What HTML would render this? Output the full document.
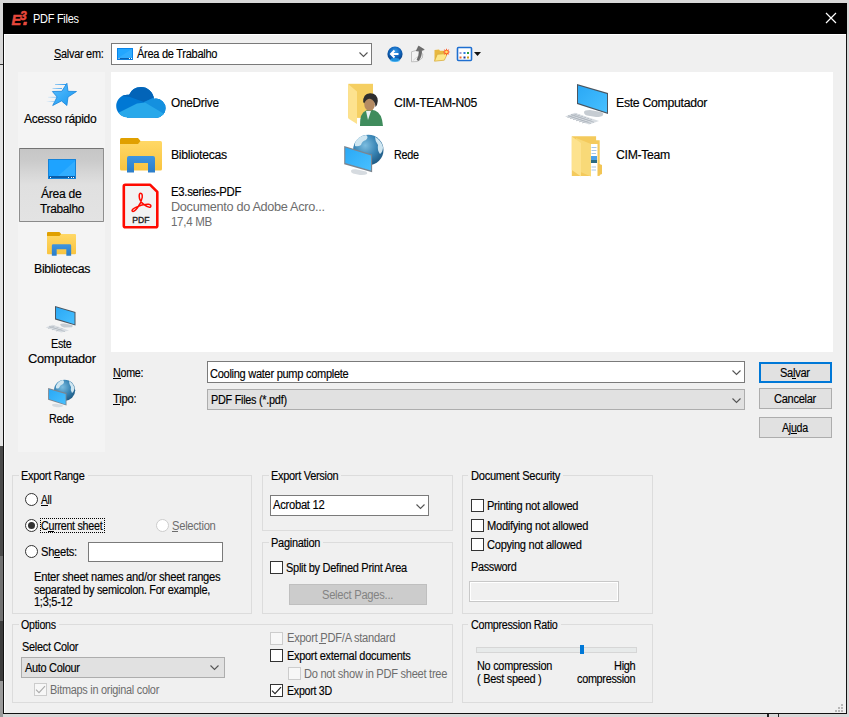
<!DOCTYPE html>
<html><head><meta charset="utf-8"><style>
html,body{margin:0;padding:0;width:849px;height:717px;overflow:hidden;background:#d4d4d4}
.a{position:absolute}
.t{position:absolute;font-family:"Liberation Sans",sans-serif;font-size:12px;line-height:1;white-space:pre;transform-origin:0 0}
</style></head><body>
<div class="a" style="left:0px;top:0px;width:849px;height:717px;box-sizing:border-box;background:#d8d8d8"></div>
<div class="a" style="left:0px;top:64px;width:3px;height:1px;box-sizing:border-box;background:#333"></div>
<div class="a" style="left:0px;top:65px;width:3px;height:381px;box-sizing:border-box;background:#e4e4e4"></div>
<div class="a" style="left:0px;top:446px;width:3px;height:110px;box-sizing:border-box;background:#4a4a4a"></div>
<div class="a" style="left:0px;top:556px;width:3px;height:65px;box-sizing:border-box;background:#707070"></div>
<div class="a" style="left:0px;top:621px;width:3px;height:60px;box-sizing:border-box;background:#3c3c3c"></div>
<div class="a" style="left:0px;top:681px;width:3px;height:36px;box-sizing:border-box;background:#9a9a9a"></div>
<div class="a" style="left:3px;top:3px;width:844px;height:711px;box-sizing:border-box;background:#f0f0f0;border:1px solid #111"></div>
<div class="a" style="left:3px;top:3px;width:844px;height:31px;box-sizing:border-box;background:#000"></div>
<div class="a" style="left:4px;top:34px;width:842px;height:1px;box-sizing:border-box;background:#fff"></div>
<div class="a" style="left:4px;top:34px;width:1px;height:679px;box-sizing:border-box;background:#fff"></div>
<svg class="a" style="left:10px;top:9px" width="20" height="18"><g fill="#e8483c" stroke="#e8483c" stroke-width=".5"><text x="1.5" y="16" font-family="Liberation Sans" font-weight="bold" font-style="italic" font-size="14.5">E</text><text x="10" y="11" font-family="Liberation Sans" font-weight="bold" font-style="italic" font-size="12">3</text><path d="M14 13 L17 13 L16.3 16 L13.3 16 Z"/></g></svg>
<svg class="a" style="left:824px;top:11px" width="14" height="14"><path d="M2 2 L12 12 M12 2 L2 12" stroke="#fff" stroke-width="1.2"/></svg>
<div class="a" style="left:111px;top:43px;width:261px;height:22px;box-sizing:border-box;border:1px solid #7a7a7a;background:#fff"></div>
<svg class="a" style="left:359px;top:52px" width="10" height="6"><path d="M0.5 0.5 L4.5 4.5 L8.5 0.5" fill="none" stroke="#555" stroke-width="1.1"/></svg>
<svg class="a" style="left:117px;top:48px" width="17" height="13"><rect x="0" y="0" width="16" height="12" fill="#0a84e8"/><rect x="1" y="1" width="14" height="9" fill="#22a6ff"/><path d="M1 10 L15 1 L15 10 Z" fill="#3db3ff" opacity=".6"/><rect x="1" y="10" width="14" height="1.2" fill="#0a5fb0"/><rect x="1.5" y="10" width="1" height="1" fill="#fff"/><rect x="12" y="10" width="1" height="1" fill="#fff"/><rect x="14" y="10" width="1" height="1" fill="#fff"/></svg>
<svg class="a" style="left:386px;top:45px" width="18" height="18"><defs><radialGradient id="bk" cx="50%" cy="35%" r="65%"><stop offset="0" stop-color="#3aa0f0"/><stop offset=".6" stop-color="#0e5fb5"/><stop offset="1" stop-color="#083a78"/></radialGradient></defs><circle cx="9" cy="9" r="7.6" fill="url(#bk)"/><ellipse cx="9" cy="15" rx="5" ry="2" fill="#2ab0ff" opacity=".7"/><path d="M5 9 L12.5 9 M8.5 5.5 L5 9 L8.5 12.5" fill="none" stroke="#fff" stroke-width="2"/></svg>
<svg class="a" style="left:408px;top:44px" width="44" height="20" viewBox="408 44 44 20"><path d="M411.5 51.8 L416 50.5 L420 51.5 L422.8 54 L422.3 58 L417.5 61.5 L411.5 61.8 Z" fill="#f2f2f2" stroke="#b4b4b4" stroke-width=".8"/><path d="M413 60.5 L417 57 L421 57" fill="none" stroke="#d0d0d0" stroke-width=".8"/><path d="M417 60 Q419.3 55.5 419.2 50.8 L416.3 50.8 L418.6 46 L424.3 49.6 L421.7 50.6 Q421.8 56.5 418.8 60.5 Z" fill="#6e6e6e" stroke="#4e4e4e" stroke-width=".5"/><path d="M434.5 50 L439 49.5 L440 50.8 L444 50.8 L444 60 L434.5 61 Z" fill="#e8b840"/><path d="M434.5 61.2 L437.3 54.3 L447.5 53.5 L444.3 60.2 Z" fill="#fde88a" stroke="#d6a838" stroke-width=".7"/><polygon points="450.30,52.00 448.26,52.73 449.19,54.69 447.23,53.76 446.50,55.80 445.77,53.76 443.81,54.69 444.74,52.73 442.70,52.00 444.74,51.27 443.81,49.31 445.77,50.24 446.50,48.20 447.23,50.24 449.19,49.31 448.26,51.27" fill="#ff4a12"/><circle cx="446.5" cy="52" r="1.4" fill="#ffe36a"/></svg>
<svg class="a" style="left:456px;top:46px" width="28" height="16"><rect x="1.5" y="1.5" width="14" height="13" rx="1" fill="#fff" stroke="#1f6fd0" stroke-width="1.6"/><rect x="3.5" y="6" width="2" height="2" fill="#9b9bd0"/><rect x="7.5" y="6" width="2" height="2" fill="#2a7ee0"/><rect x="11" y="6" width="2" height="2" fill="#2aa040"/><rect x="3.5" y="10.5" width="2" height="2" fill="#f06a30"/><rect x="7.5" y="10.5" width="2" height="2" fill="#1a3a9a"/><rect x="11" y="10.5" width="2" height="2" fill="#d0a020"/><path d="M18 6 L25 6 L21.5 10 Z" fill="#111"/></svg>
<div class="a" style="left:18px;top:72px;width:87px;height:380px;box-sizing:border-box;background:#f4f4f4"></div>
<div class="a" style="left:19px;top:148px;width:85px;height:74px;box-sizing:border-box;border:1px solid #8a8a8a;border-top-color:#737373;border-left-color:#8f8f8f;border-right-color:#8f8f8f;border-radius:1px;background:linear-gradient(#c6c6c6,#cbcbcb 12px,#d6d6d6 24px,#e0e0e0 36px,#e3e3e3)"></div>
<svg class="a" style="left:44px;top:80px" width="36" height="30" viewBox="44 80 36 30"><defs><linearGradient id="stg" x1="0" y1="0" x2="1" y2="1"><stop offset="0" stop-color="#5cc0ff"/><stop offset="1" stop-color="#1696ee"/></linearGradient><linearGradient id="mlg" x1="0" y1="0" x2="1" y2="0"><stop offset="0" stop-color="#2a9af0" stop-opacity="0"/><stop offset="1" stop-color="#2a9af0"/></linearGradient></defs><path d="M55 84.5 L66 84.5 M52.5 88.5 L62 88.5 M48 97.3 L57 97.3 M46 101.5 L54 101.5" stroke="url(#mlg)" stroke-width="1"/><path d="M66.9 83.3 L68 91.3 L76.5 91.5 L68 97 L66.9 105.5 L61.5 100.9 L52.7 105.5 L57.1 97 L52.4 91.5 L61.8 91.3 Z" fill="url(#stg)" stroke="#1684dc" stroke-width=".8" stroke-linejoin="round"/></svg>
<svg class="a" style="left:48px;top:159px" width="29" height="21"><rect x="0" y="0" width="28" height="20" fill="#1683d8"/><rect x="1" y="1" width="26" height="16" fill="#1ea3ff"/><path d="M10 17 L27 2 L27 17 Z" fill="#42b6ff" opacity=".55"/><rect x="1" y="17" width="26" height="2" fill="#0b5da8"/><rect x="2" y="18" width="1" height="1" fill="#fff"/><rect x="20" y="18" width="1" height="1" fill="#fff"/><rect x="23" y="18" width="1" height="1" fill="#fff"/><rect x="25" y="18" width="1" height="1" fill="#fff"/></svg>
<svg width="0" height="0" style="position:absolute"><defs><linearGradient id="fy" x1="0" y1="0" x2="0" y2="1"><stop offset="0" stop-color="#ffd866"/><stop offset="1" stop-color="#f9c440"/></linearGradient><linearGradient id="lb" x1="0" y1="0" x2="0" y2="1"><stop offset="0" stop-color="#3e95e0"/><stop offset="1" stop-color="#2b7cc8"/></linearGradient><linearGradient id="scr" x1="0" y1="0" x2="1" y2="1"><stop offset="0" stop-color="#2aa8f5"/><stop offset="1" stop-color="#48c0ff"/></linearGradient><radialGradient id="glb" cx="40%" cy="35%" r="70%"><stop offset="0" stop-color="#7cbde0"/><stop offset=".55" stop-color="#3884b4"/><stop offset="1" stop-color="#1d5780"/></radialGradient></defs></svg>
<svg class="a" style="left:47px;top:232px" width="29" height="24" viewBox="0 0 42 35" preserveAspectRatio="none"><rect x="0" y="3" width="42" height="29.5" rx="1.5" fill="url(#fy)"/><path d="M0 1.5 Q0 0 1.5 0 L18 0 L20.5 3 L18 6 L0 6 Z" fill="#e0a000"/><path d="M7 34.6 L7 20 Q7 18 9 18 L33 18 Q35 18 35 20 L35 34.6 L28 34.6 L28 25 L14 25 L14 34.6 Z" fill="url(#lb)"/></svg>
<div class="a" style="left:111px;top:72px;width:722px;height:280px;box-sizing:border-box;background:#fff"></div>
<svg class="a" style="left:116px;top:86px" width="50" height="33" viewBox="0 0 50 33"><defs><clipPath id="cl"><circle cx="11.5" cy="20" r="11.3"/><circle cx="25" cy="14" r="13"/><circle cx="40" cy="22.2" r="9.6"/><rect x="11" y="16" width="30" height="15.8"/></clipPath></defs><g clip-path="url(#cl)"><rect x="0" y="0" width="50" height="33" fill="#0078d4"/><path d="M0 0 L50 0 L50 8 L37 12 L28 16 L14 11 L0 9 Z" fill="#0364b8"/><path d="M28 16 L37 12 L50 12 L50 33 L40 33 Z" fill="#1490df"/><path d="M0 28 L21 17.5 L29 16.5 L50 29 L50 33 L0 33 Z" fill="#28a8ea"/></g></svg>
<svg class="a" style="left:120px;top:138px" width="42" height="35" viewBox="0 0 42 35" preserveAspectRatio="none"><rect x="0" y="3" width="42" height="29.5" rx="1.5" fill="url(#fy)"/><path d="M0 1.5 Q0 0 1.5 0 L18 0 L20.5 3 L18 6 L0 6 Z" fill="#e0a000"/><path d="M7 34.6 L7 20 Q7 18 9 18 L33 18 Q35 18 35 20 L35 34.6 L28 34.6 L28 25 L14 25 L14 34.6 Z" fill="url(#lb)"/></svg>
<svg class="a" style="left:120px;top:182px" width="42" height="50" viewBox="120 182 42 50"><path d="M125.3 184.8 L150.2 184.8 L157.3 191.9 L157.3 225.8 Q157.3 227.3 155.8 227.3 L125.3 227.3 Q123.8 227.3 123.8 225.8 L123.8 186.3 Q123.8 184.8 125.3 184.8 Z" fill="#f3f3f3" stroke="#ff0a00" stroke-width="2.6" stroke-linejoin="round"/><path d="M140.6 193.3 Q142.6 193.3 142.2 197.5 Q141.5 202.5 137.5 207.8 Q133.8 212.3 132.3 211.2 Q131 209.8 135.8 207.3 Q142.5 204 148.6 204.3 Q151.8 205 150.6 206.8 Q148.8 208.2 144 204.6 Q139.2 200.5 139.2 196.2 Q139.2 193.3 140.6 193.3 Z" fill="none" stroke="#ff0a00" stroke-width="1.5"/><text x="140.9" y="222.8" text-anchor="middle" font-family="Liberation Sans" font-size="8.6" fill="#222" stroke="#222" stroke-width=".35">PDF</text></svg>
<svg class="a" style="left:44px;top:303px" width="34" height="32" viewBox="44 303 34 32"><path d="M55 306 L75.5 312 L75.5 325.5 L55 319.5 Z" fill="#4a5560"/><path d="M56 307.3 L74.5 312.8 L74.5 324.2 L56 318.6 Z" fill="url(#scr)"/><path d="M60 324.5 Q61 323.3 64 323.5 L72 325 Q73.5 326 72 327.2 L64 327.6 Q60.5 326.5 60 324.5Z" fill="#c6ccd2"/><path d="M45.6 327.4 L52.6 324.8 L69 330.4 L61.2 332.4 Z" fill="#d8dde2"/><path d="M49 326.2 L65 331.6 M48 328.5 L54.5 326 M52 329.8 L58.5 327.3 M56 331.1 L62.5 328.6" stroke="#aab2ba" stroke-width=".6"/></svg>
<svg class="a" style="left:46px;top:378px" width="32" height="32" viewBox="46 378 32 32"><circle cx="64.6" cy="390.3" r="10.6" fill="url(#glb)"/><path d="M56 386 Q58 381 63 380 Q65 382 63 384 Q60 385 59 388 Q57 389 56 388Z" fill="#cfe6f1"/><path d="M69 381 Q73 383 74.5 388 Q74 392 72 393 Q70 390 71 387 Q69 384 69 381Z" fill="#cfe6f1"/><path d="M48.1 388.1 L66.5 393.1 L66.5 405.6 L48.1 399.8 Z" fill="#7b8590"/><path d="M49 389.3 L65.6 393.9 L65.6 404.4 L49 399 Z" fill="url(#scr)"/><path d="M52 404.5 Q53 403.5 56 403.7 L62 404.8 Q63.5 405.6 62.6 406.6 Q61 407.6 57 407.3 L53.5 406.5 Q51.8 405.8 52 404.5Z" fill="#d6dbe0"/></svg>
<svg class="a" style="left:344px;top:80px" width="44" height="48" viewBox="344 80 44 48"><rect x="348.3" y="83.8" width="24.7" height="34.1" fill="#f5cf62"/><path d="M348.3 84.3 L357 91.4 L357 124 L348.3 118.6 Z" fill="#fde28e"/><path d="M360 126 Q359.5 113 366 110.5 L370 109.5 L375 110.5 Q382 113 383 126 Z" fill="#3f8c5c"/><path d="M366 111 L368 120 L371 111 Z" fill="#e8f2f4"/><ellipse cx="369.6" cy="104.5" rx="5.3" ry="6.3" fill="#b48a62"/><path d="M363.2 102 Q362.8 94 370 93.2 Q377.5 93 377.8 101 Q377.5 105 375.5 107 Q375 100 370 98.8 Q366 99 364.2 103.5 Z" fill="#2e2e2e"/></svg>
<svg class="a" style="left:340px;top:132px" width="48" height="46" viewBox="340 132 48 46"><circle cx="368.3" cy="150" r="15.2" fill="url(#glb)"/><path d="M355 143 Q358 136 366 135 Q369 137 366 140 Q362 141 361 145 Q358 147 355 146Z" fill="#cfe6f1"/><path d="M375 137 Q381 140 383 147 Q383 152 380 154 Q377 150 378 145 Q375 141 375 137Z" fill="#cfe6f1"/><path d="M344.2 146.1 L372.1 154.5 L372.1 172.2 L344.2 164.3 Z" fill="#7b8590"/><path d="M345.3 147.6 L371 155.4 L371 170.6 L345.3 163.1 Z" fill="url(#scr)"/><path d="M351 170.5 Q352 169 356 169.3 L366 171.5 Q368 172.5 367 174 Q365 175.3 360 175 L353 173.5 Q350.5 172.3 351 170.5Z" fill="#d6dbe0"/></svg>
<svg class="a" style="left:562px;top:80px" width="48" height="48" viewBox="562 80 48 48"><path d="M577 84 L608 93 L608 114 L577 104 Z" fill="#4a5560"/><path d="M578 85.6 L607 94 L607 112.6 L578 103 Z" fill="url(#scr)"/><path d="M584 112 Q584 110 590 110 L601 112 Q604 113 603 115 Q602 117 596 117 L587 115.5 Q584 114.5 584 112Z" fill="#c6ccd2"/><path d="M565 116.5 L575 112.7 L599 121 L589 124.4 Z" fill="#d8dde2"/><path d="M567.5 117.5 L577 114 M570 118.6 L580 115 M573 119.7 L583 116.2 M576 120.8 L586 117.3 M579 121.9 L589 118.4 M582 123 L592 119.5 M568 115.5 L591 123.5 M571 114.3 L594 122.3" stroke="#aab2ba" stroke-width=".7"/></svg>
<svg class="a" style="left:568px;top:132px" width="38" height="48" viewBox="568 132 38 48"><path d="M571.8 136.2 L596.1 136.2 L596.1 140.2 L599.7 140.2 L599.7 176 L571.8 176 Z" fill="#f4ca5c"/><path d="M597 163 L602 165 L602 174 L597 176 Z" fill="#f2c555"/><path d="M590 144 L597.5 144 L597.5 176.5 L590 176.5 Z" fill="#ffffff"/><path d="M591.5 147.5 L596.5 147.5 M591.5 150.5 L596.5 150.5 M591.5 153.5 L596 153.5 M591.5 167 L596 167 M591.5 170 L596 170" stroke="#8fb8e0" stroke-width=".8"/><rect x="591" y="156" width="6" height="4" fill="#4aa0e8"/><rect x="591" y="160" width="6" height="3" fill="#2a6a80"/><path d="M576 138 L591 144 L591 176.4 L576 170 Z" fill="#f8d978"/><path d="M571.8 136.5 L581 143 L581 176.6 L571.8 170 Z" fill="#fde28e"/></svg>
<div class="a" style="left:207px;top:361px;width:538px;height:22px;box-sizing:border-box;border:1px solid #7a7a7a;background:#fff"></div>
<svg class="a" style="left:732px;top:370px" width="10" height="6"><path d="M0.5 0.5 L4.5 4.5 L8.5 0.5" fill="none" stroke="#555" stroke-width="1.1"/></svg>
<div class="a" style="left:207px;top:389px;width:538px;height:21px;box-sizing:border-box;border:1px solid #adadad;background:#e1e1e1"></div>
<svg class="a" style="left:732px;top:398px" width="10" height="6"><path d="M0.5 0.5 L4.5 4.5 L8.5 0.5" fill="none" stroke="#555" stroke-width="1.1"/></svg>
<div class="a" style="left:759px;top:362px;width:73px;height:21px;box-sizing:border-box;border:2px solid #0078d7;background:#e1e1e1"></div>
<div class="a" style="left:759px;top:388px;width:73px;height:21px;box-sizing:border-box;border:1px solid #adadad;background:#e1e1e1"></div>
<div class="a" style="left:759px;top:417px;width:73px;height:21px;box-sizing:border-box;border:1px solid #adadad;background:#e1e1e1"></div>
<div class="a" style="left:12px;top:475px;width:240px;height:139px;box-sizing:border-box;border:1px solid #dcdcdc"></div><div class="a" style="left:19px;top:475px;width:69px;height:1px;background:#f0f0f0"></div>
<div class="a" style="left:262px;top:475px;width:191px;height:56px;box-sizing:border-box;border:1px solid #dcdcdc"></div><div class="a" style="left:269px;top:475px;width:72px;height:1px;background:#f0f0f0"></div>
<div class="a" style="left:262px;top:542px;width:191px;height:72px;box-sizing:border-box;border:1px solid #dcdcdc"></div><div class="a" style="left:269px;top:542px;width:54px;height:1px;background:#f0f0f0"></div>
<div class="a" style="left:462px;top:475px;width:191px;height:139px;box-sizing:border-box;border:1px solid #dcdcdc"></div><div class="a" style="left:468px;top:475px;width:95px;height:1px;background:#f0f0f0"></div>
<div class="a" style="left:12px;top:624px;width:441px;height:79px;box-sizing:border-box;border:1px solid #dcdcdc"></div><div class="a" style="left:19px;top:624px;width:40px;height:1px;background:#f0f0f0"></div>
<div class="a" style="left:462px;top:624px;width:191px;height:79px;box-sizing:border-box;border:1px solid #dcdcdc"></div><div class="a" style="left:468px;top:624px;width:93px;height:1px;background:#f0f0f0"></div>
<svg class="a" style="left:25px;top:493px" width="13" height="13"><circle cx="6.5" cy="6.5" r="6" fill="#fff" stroke="#333333" stroke-width="1"/></svg>
<svg class="a" style="left:25px;top:519px" width="13" height="13"><circle cx="6.5" cy="6.5" r="6" fill="#fff" stroke="#333333" stroke-width="1"/><circle cx="6.5" cy="6.5" r="3.5" fill="#333"/></svg>
<svg class="a" style="left:156px;top:519px" width="13" height="13"><circle cx="6.5" cy="6.5" r="6" fill="#fff" stroke="#cccccc" stroke-width="1"/></svg>
<svg class="a" style="left:25px;top:545px" width="13" height="13"><circle cx="6.5" cy="6.5" r="6" fill="#fff" stroke="#333333" stroke-width="1"/></svg>
<div class="a" style="left:40px;top:518px;width:65px;height:15px;box-sizing:border-box;border:1px dotted #000"></div>
<div class="a" style="left:88px;top:542px;width:135px;height:20px;box-sizing:border-box;border:1px solid #7a7a7a;background:#fff"></div>
<div class="a" style="left:270px;top:495px;width:159px;height:21px;box-sizing:border-box;border:1px solid #7a7a7a;background:#fff"></div>
<svg class="a" style="left:416px;top:504px" width="10" height="6"><path d="M0.5 0.5 L4.5 4.5 L8.5 0.5" fill="none" stroke="#555" stroke-width="1.1"/></svg>
<div class="a" style="left:270px;top:561px;width:13px;height:13px;box-sizing:border-box;border:1px solid #333333;background:#fff"></div>
<div class="a" style="left:289px;top:584px;width:138px;height:21px;box-sizing:border-box;border:1px solid #bfbfbf;background:#cccccc"></div>
<div class="a" style="left:471px;top:499px;width:13px;height:13px;box-sizing:border-box;border:1px solid #333333;background:#fff"></div>
<div class="a" style="left:471px;top:519px;width:13px;height:13px;box-sizing:border-box;border:1px solid #333333;background:#fff"></div>
<div class="a" style="left:471px;top:538px;width:13px;height:13px;box-sizing:border-box;border:1px solid #333333;background:#fff"></div>
<div class="a" style="left:469px;top:581px;width:150px;height:21px;box-sizing:border-box;border:1px solid #c8c8c8;box-shadow:inset 0 0 0 1px #fff;background:#f0f0f0"></div>
<div class="a" style="left:21px;top:657px;width:204px;height:21px;box-sizing:border-box;border:1px solid #adadad;background:#e1e1e1"></div>
<svg class="a" style="left:210px;top:665px" width="10" height="6"><path d="M0.5 0.5 L4.5 4.5 L8.5 0.5" fill="none" stroke="#555" stroke-width="1.1"/></svg>
<div class="a" style="left:34px;top:683px;width:13px;height:13px;box-sizing:border-box;border:1px solid #cccccc;background:#f7f7f7"></div><svg class="a" style="left:34px;top:683px" width="13" height="13"><path d="M2 6.7 L5 9.7 L11 3.2" fill="none" stroke="#aaaaaa" stroke-width="1.1"/></svg>
<div class="a" style="left:270px;top:632px;width:13px;height:13px;box-sizing:border-box;border:1px solid #cccccc;background:#f7f7f7"></div>
<div class="a" style="left:270px;top:649px;width:13px;height:13px;box-sizing:border-box;border:1px solid #333333;background:#fff"></div>
<div class="a" style="left:288px;top:667px;width:13px;height:13px;box-sizing:border-box;border:1px solid #cccccc;background:#f7f7f7"></div>
<div class="a" style="left:270px;top:684px;width:13px;height:13px;box-sizing:border-box;border:1px solid #333333;background:#fff"></div><svg class="a" style="left:270px;top:684px" width="13" height="13"><path d="M2 6.7 L5 9.7 L11 3.2" fill="none" stroke="#222" stroke-width="1.1"/></svg>
<div class="a" style="left:476px;top:647px;width:161px;height:6px;box-sizing:border-box;border:1px solid #d6d6d6;background:#e7eaea"></div>
<div class="a" style="left:580px;top:645px;width:4px;height:9px;box-sizing:border-box;background:#0078d7"></div>
<div class="a" style="left:767px;top:714px;width:2px;height:3px;box-sizing:border-box;background:#222"></div>
<div class="a" style="left:778px;top:714px;width:1px;height:3px;box-sizing:border-box;background:#222"></div>
<div class="a" style="left:841px;top:704px;width:2px;height:2px;background:#b8b8b8"></div><div class="a" style="left:838px;top:707px;width:2px;height:2px;background:#b8b8b8"></div><div class="a" style="left:841px;top:707px;width:2px;height:2px;background:#b8b8b8"></div><div class="a" style="left:835px;top:710px;width:2px;height:2px;background:#b8b8b8"></div><div class="a" style="left:838px;top:710px;width:2px;height:2px;background:#b8b8b8"></div><div class="a" style="left:841px;top:710px;width:2px;height:2px;background:#b8b8b8"></div>
<span class="t" style="left:33.40px;top:13px;letter-spacing:-0.3px;transform:scaleX(0.9151);color:#fff;">PDF Files</span>
<span class="t" style="left:54.00px;top:48px;letter-spacing:-0.3px;transform:scaleX(0.9113);color:#000;-webkit-text-stroke:0.15px #000;">Salvar em:</span>
<span class="t" style="left:137.00px;top:48px;letter-spacing:-0.3px;transform:scaleX(0.9194);color:#000;-webkit-text-stroke:0.15px #000;">Área de Trabalho</span>
<span class="t" style="left:24.40px;top:113px;letter-spacing:-0.3px;transform:scaleX(1.0032);color:#000;-webkit-text-stroke:0.15px #000;">Acesso rápido</span>
<span class="t" style="left:41.40px;top:188px;letter-spacing:-0.3px;transform:scaleX(1.0110);color:#000;-webkit-text-stroke:0.15px #000;">Área de</span>
<span class="t" style="left:40.20px;top:203px;letter-spacing:-0.3px;transform:scaleX(0.9902);color:#000;-webkit-text-stroke:0.15px #000;">Trabalho</span>
<span class="t" style="left:33.50px;top:263px;letter-spacing:-0.3px;transform:scaleX(1.0231);color:#000;-webkit-text-stroke:0.15px #000;">Bibliotecas</span>
<span class="t" style="left:51.00px;top:338px;letter-spacing:-0.3px;transform:scaleX(0.8960);color:#000;-webkit-text-stroke:0.15px #000;">Este</span>
<span class="t" style="left:27.50px;top:353px;letter-spacing:-0.3px;transform:scaleX(1.0736);color:#000;-webkit-text-stroke:0.15px #000;">Computador</span>
<span class="t" style="left:48.60px;top:413px;letter-spacing:-0.3px;transform:scaleX(0.8964);color:#000;-webkit-text-stroke:0.15px #000;">Rede</span>
<span class="t" style="left:170.50px;top:97px;letter-spacing:-0.3px;transform:scaleX(0.9875);color:#000;-webkit-text-stroke:0.15px #000;">OneDrive</span>
<span class="t" style="left:170.50px;top:149px;letter-spacing:-0.3px;transform:scaleX(1.0194);color:#000;-webkit-text-stroke:0.15px #000;">Bibliotecas</span>
<span class="t" style="left:170.50px;top:186px;letter-spacing:-0.3px;transform:scaleX(0.9448);color:#000;-webkit-text-stroke:0.15px #000;">E3.series-PDF</span>
<span class="t" style="left:170.50px;top:201px;letter-spacing:-0.3px;transform:scaleX(1.0598);color:#6d6d6d;">Documento do Adobe Acro...</span>
<span class="t" style="left:170.50px;top:216px;letter-spacing:-0.3px;transform:scaleX(0.9607);color:#6d6d6d;">17,4 MB</span>
<span class="t" style="left:393.70px;top:97px;letter-spacing:-0.3px;transform:scaleX(1.0138);color:#000;-webkit-text-stroke:0.15px #000;">CIM-TEAM-N05</span>
<span class="t" style="left:393.70px;top:149px;letter-spacing:-0.3px;transform:scaleX(0.8999);color:#000;-webkit-text-stroke:0.15px #000;">Rede</span>
<span class="t" style="left:616.40px;top:97px;letter-spacing:-0.3px;transform:scaleX(1.0248);color:#000;-webkit-text-stroke:0.15px #000;">Este Computador</span>
<span class="t" style="left:616.40px;top:149px;letter-spacing:-0.3px;transform:scaleX(1.0199);color:#000;-webkit-text-stroke:0.15px #000;">CIM-Team</span>
<span class="t" style="left:113.20px;top:367px;letter-spacing:-0.3px;transform:scaleX(0.8932);color:#000;-webkit-text-stroke:0.15px #000;">Nome:</span>
<span class="t" style="left:113.20px;top:393px;letter-spacing:-0.3px;transform:scaleX(0.9393);color:#000;-webkit-text-stroke:0.15px #000;">Tipo:</span>
<span class="t" style="left:210.40px;top:368px;letter-spacing:-0.3px;transform:scaleX(0.9189);color:#000;-webkit-text-stroke:0.15px #000;">Cooling water pump complete</span>
<span class="t" style="left:211.30px;top:394px;letter-spacing:-0.3px;transform:scaleX(0.9060);color:#000;-webkit-text-stroke:0.15px #000;">PDF Files (*.pdf)</span>
<span class="t" style="left:780.00px;top:367px;letter-spacing:-0.3px;transform:scaleX(0.9226);color:#000;-webkit-text-stroke:0.15px #000;">Salvar</span>
<span class="t" style="left:773.60px;top:393px;letter-spacing:-0.3px;transform:scaleX(0.9210);color:#000;-webkit-text-stroke:0.15px #000;">Cancelar</span>
<span class="t" style="left:782.00px;top:422px;letter-spacing:-0.3px;transform:scaleX(0.8854);color:#000;-webkit-text-stroke:0.15px #000;">Ajuda</span>
<span class="t" style="left:21.30px;top:470px;letter-spacing:-0.3px;transform:scaleX(0.9091);color:#000;-webkit-text-stroke:0.15px #000;">Export Range</span>
<span class="t" style="left:40.90px;top:494px;letter-spacing:-0.3px;transform:scaleX(0.8451);color:#000;-webkit-text-stroke:0.15px #000;">All</span>
<span class="t" style="left:40.90px;top:520px;letter-spacing:-0.3px;transform:scaleX(0.8915);color:#000;-webkit-text-stroke:0.15px #000;">Current sheet</span>
<span class="t" style="left:171.80px;top:520px;letter-spacing:-0.3px;transform:scaleX(0.9332);color:#6d6d6d;">Selection</span>
<span class="t" style="left:40.90px;top:546px;letter-spacing:-0.3px;transform:scaleX(0.9284);color:#000;-webkit-text-stroke:0.15px #000;">Sheets:</span>
<span class="t" style="left:34.40px;top:571px;letter-spacing:-0.3px;transform:scaleX(0.9330);color:#000;-webkit-text-stroke:0.15px #000;">Enter sheet names and/or sheet ranges</span>
<span class="t" style="left:34.00px;top:584px;letter-spacing:-0.3px;transform:scaleX(0.9138);color:#000;-webkit-text-stroke:0.15px #000;">separated by semicolon. For example,</span>
<span class="t" style="left:34.40px;top:596px;letter-spacing:-0.3px;transform:scaleX(0.9205);color:#000;-webkit-text-stroke:0.15px #000;">1;3;5-12</span>
<span class="t" style="left:271.40px;top:470px;letter-spacing:-0.3px;transform:scaleX(0.9120);color:#000;-webkit-text-stroke:0.15px #000;">Export Version</span>
<span class="t" style="left:273.00px;top:499px;letter-spacing:-0.3px;transform:scaleX(0.9342);color:#000;-webkit-text-stroke:0.15px #000;">Acrobat 12</span>
<span class="t" style="left:271.40px;top:537px;letter-spacing:-0.3px;transform:scaleX(0.9149);color:#000;-webkit-text-stroke:0.15px #000;">Pagination</span>
<span class="t" style="left:286.40px;top:562px;letter-spacing:-0.3px;transform:scaleX(0.9155);color:#000;-webkit-text-stroke:0.15px #000;">Split by Defined Print Area</span>
<span class="t" style="left:322.40px;top:589px;letter-spacing:-0.3px;transform:scaleX(0.9320);color:#838383;">Select Pages...</span>
<span class="t" style="left:470.70px;top:470px;letter-spacing:-0.3px;transform:scaleX(0.9257);color:#000;-webkit-text-stroke:0.15px #000;">Document Security</span>
<span class="t" style="left:487.40px;top:500px;letter-spacing:-0.3px;transform:scaleX(0.9232);color:#000;-webkit-text-stroke:0.15px #000;">Printing not allowed</span>
<span class="t" style="left:487.40px;top:520px;letter-spacing:-0.3px;transform:scaleX(0.9262);color:#000;-webkit-text-stroke:0.15px #000;">Modifying not allowed</span>
<span class="t" style="left:486.80px;top:539px;letter-spacing:-0.3px;transform:scaleX(0.9245);color:#000;-webkit-text-stroke:0.15px #000;">Copying not allowed</span>
<span class="t" style="left:470.90px;top:561px;letter-spacing:-0.3px;transform:scaleX(0.9036);color:#000;-webkit-text-stroke:0.15px #000;">Password</span>
<span class="t" style="left:21.00px;top:619px;letter-spacing:-0.3px;transform:scaleX(0.8848);color:#000;-webkit-text-stroke:0.15px #000;">Options</span>
<span class="t" style="left:21.60px;top:641px;letter-spacing:-0.3px;transform:scaleX(0.9087);color:#000;-webkit-text-stroke:0.15px #000;">Select Color</span>
<span class="t" style="left:25.00px;top:662px;letter-spacing:-0.3px;transform:scaleX(0.9093);color:#000;-webkit-text-stroke:0.15px #000;">Auto Colour</span>
<span class="t" style="left:50.40px;top:684px;letter-spacing:-0.3px;transform:scaleX(0.9094);color:#6d6d6d;">Bitmaps in original color</span>
<span class="t" style="left:286.70px;top:632px;letter-spacing:-0.3px;transform:scaleX(0.9288);color:#6d6d6d;">Export PDF/A standard</span>
<span class="t" style="left:286.70px;top:650px;letter-spacing:-0.3px;transform:scaleX(0.9126);color:#000;-webkit-text-stroke:0.15px #000;">Export external documents</span>
<span class="t" style="left:304.40px;top:668px;letter-spacing:-0.3px;transform:scaleX(0.9251);color:#6d6d6d;">Do not show in PDF sheet tree</span>
<span class="t" style="left:286.70px;top:685px;letter-spacing:-0.3px;transform:scaleX(0.8871);color:#000;-webkit-text-stroke:0.15px #000;">Export 3D</span>
<span class="t" style="left:471.00px;top:619px;letter-spacing:-0.3px;transform:scaleX(0.8927);color:#000;-webkit-text-stroke:0.15px #000;">Compression Ratio</span>
<span class="t" style="left:477.30px;top:660px;letter-spacing:-0.3px;transform:scaleX(0.9096);color:#000;-webkit-text-stroke:0.15px #000;">No compression</span>
<span class="t" style="left:477.30px;top:673px;letter-spacing:-0.3px;transform:scaleX(0.9138);color:#000;-webkit-text-stroke:0.15px #000;">( Best speed )</span>
<span class="t" style="left:614.00px;top:660px;letter-spacing:-0.3px;transform:scaleX(0.9132);color:#000;-webkit-text-stroke:0.15px #000;">High</span>
<span class="t" style="left:577.00px;top:673px;letter-spacing:-0.3px;transform:scaleX(0.9013);color:#000;-webkit-text-stroke:0.15px #000;">compression</span>
<div class="a" style="left:54px;top:59px;width:7px;height:1px;background:#000"></div>
<div class="a" style="left:113px;top:378px;width:8px;height:1px;background:#000"></div>
<div class="a" style="left:113px;top:404px;width:7px;height:1px;background:#000"></div>
<div class="a" style="left:792px;top:378px;width:4px;height:1px;background:#000"></div>
<div class="a" style="left:791px;top:433px;width:6px;height:1px;background:#000"></div>
<div class="a" style="left:41px;top:505px;width:7px;height:1px;background:#000"></div>
<div class="a" style="left:48px;top:531px;width:6px;height:1px;background:#000"></div>
<div class="a" style="left:172px;top:531px;width:6px;height:1px;background:#6d6d6d"></div>
<div class="a" style="left:54px;top:557px;width:6px;height:1px;background:#000"></div>
<div class="a" style="left:319px;top:643px;width:7px;height:1px;background:#6d6d6d"></div>
</body></html>
